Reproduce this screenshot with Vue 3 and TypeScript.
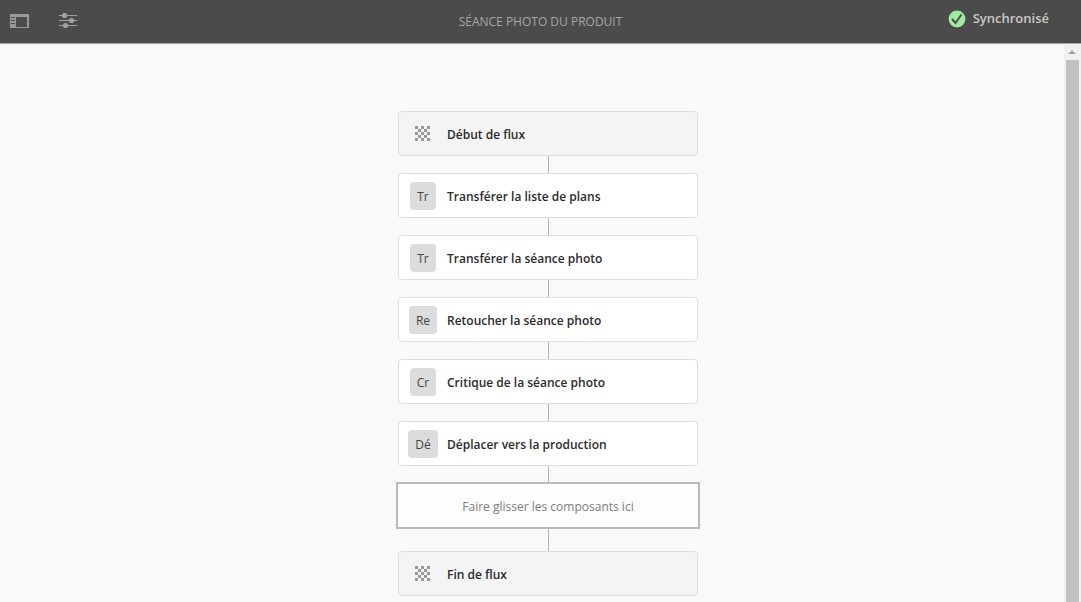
<script setup lang="ts">
interface Step {
  id: number
  label: string
  badge?: string
}

const steps: Step[] = [
  { id: 1, label: 'Début de flux' },
  { id: 2, label: 'Transférer la liste de plans', badge: 'Tr' },
  { id: 3, label: 'Transférer la séance photo', badge: 'Tr' },
  { id: 4, label: 'Retoucher la séance photo', badge: 'Re' },
  { id: 5, label: 'Critique de la séance photo', badge: 'Cr' },
  { id: 6, label: 'Déplacer vers la production', badge: 'Dé' },
]

const checkerCells: { x: number; y: number }[] = []
for (let row = 0; row < 5; row++) {
  for (let col = 0; col < 5; col++) {
    if ((row + col) % 2 === 0) checkerCells.push({ x: col * 3, y: row * 3 })
  }
}
</script>

<template>
  <div class="editor">
    <header class="topbar">
      <div class="tools">
        <button type="button" class="tool" aria-label="Panneau latéral">
          <svg width="20" height="16" viewBox="0 0 20 16" shape-rendering="crispEdges">
            <path fill="#989898" fill-rule="evenodd" d="M1 1h19v14H1zM7 4v10h11V4zM2 4h4v1H2zM2 7h4v1H2zM2 10h4v1H2z" />
          </svg>
        </button>
        <button type="button" class="tool" aria-label="Propriétés">
          <svg width="20" height="16" viewBox="0 0 20 16">
            <g fill="#a0a0a0">
              <path d="M1 2h18v1H1zM1 7h18v1H1zM1 12h18v1H1z" />
              <circle cx="6.500" cy="2.500" r="2.600" />
              <circle cx="13.500" cy="7.500" r="2.600" />
              <circle cx="7.500" cy="12.500" r="2.600" />
            </g>
          </svg>
        </button>
      </div>
      <h1 class="title">SÉANCE PHOTO DU PRODUIT</h1>
      <div class="status" role="status">
        <svg width="18" height="20" viewBox="0 0 18 20">
          <circle cx="9" cy="11" r="8.400" fill="#a0eba0" />
          <path d="M4 11l3.500 4 6-8.500" fill="none" stroke="#4b4b4b" stroke-width="2" />
        </svg>
        <span>Synchronisé</span>
      </div>
    </header>

    <div class="workspace">
      <main class="canvas">
        <div class="flow">
          <template v-for="step in steps" :key="step.id">
            <div class="card" :class="{ terminal: !step.badge }">
              <span class="icon">
                <span v-if="step.badge" class="badge">{{ step.badge }}</span>
                <svg v-else width="16" height="15" viewBox="0 0 16 15" shape-rendering="crispEdges">
                  <rect v-for="c in checkerCells" :key="`${c.x}-${c.y}`" :x="c.x" :y="c.y" width="3" height="3" fill="#999" />
                </svg>
              </span>
              <span class="label">{{ step.label }}</span>
            </div>
            <div class="link"></div>
          </template>
          <div class="drop">Faire glisser les composants ici</div>
          <div class="link last"></div>
          <div class="card terminal">
            <span class="icon">
              <svg width="16" height="15" viewBox="0 0 16 15" shape-rendering="crispEdges">
                <rect v-for="c in checkerCells" :key="`${c.x}-${c.y}`" :x="c.x" :y="c.y" width="3" height="3" fill="#999" />
              </svg>
            </span>
            <span class="label">Fin de flux</span>
          </div>
        </div>
      </main>
      <div class="scrollbar" aria-hidden="true">
        <svg class="arrow" width="17" height="16" viewBox="0 0 17 16">
          <path d="M4 10h8L8 6z" fill="#a3a3a3" />
        </svg>
        <div class="thumb"></div>
      </div>
    </div>
  </div>
</template>

<style>
body {
  background: #f9f9f9;
}
</style>

<style scoped>
.editor {
  display: flex;
  flex-direction: column;
  height: 100vh;
  overflow: hidden;
  font-family: "Open Sans", "Noto Sans", sans-serif;
  font-size: 12px;
  color: #2b2b2b;
}

.topbar {
  display: grid;
  grid-template-columns: 1fr auto 1fr;
  align-items: center;
  flex: none;
  min-height: 43px;
  background: #4b4b4b;
  border-bottom: 1px solid #aaa6a6;
}

.tools {
  display: flex;
  gap: 29px;
  padding: 0 0 2px 9px;
}

.tool {
  display: flex;
  padding: 0;
  border: 0;
  background: none;
}

.title {
  margin: 0;
  font-size: 12px;
  font-weight: 400;
  color: #a6a6a6;
}

.status {
  display: flex;
  align-items: center;
  justify-content: flex-end;
  gap: 7px;
  padding: 0 32px 8px 0;
  font-size: 13px;
  font-weight: 600;
  color: #c8c8c8;
}

.workspace {
  display: flex;
  flex: 1;
  min-height: 0;
}

.canvas {
  flex: 1;
  padding: 67px 0 0 32px;
}

.flow {
  display: flex;
  flex-direction: column;
  align-items: center;
}

.card {
  display: flex;
  align-items: center;
  box-sizing: border-box;
  width: 300px;
  min-height: 45px;
  border: 1px solid #dedede;
  border-radius: 4px;
  background: #fff;
}

.terminal {
  background: #f4f4f4;
}

.icon {
  display: flex;
  justify-content: center;
  width: 48px;
}

.badge {
  padding: 2px 7px 0;
  border-radius: 4px;
  background: #dcdcdc;
  color: #444;
  font-size: 12px;
  line-height: 26px;
}

.label {
  padding-top: 2px;
  font-weight: 600;
}

.link {
  width: 1px;
  height: 17px;
  background: #b4b4b4;
}

.link:has(+ .drop) {
  height: 16px;
}

.last {
  height: 22px;
}

.drop {
  box-sizing: border-box;
  width: 304px;
  padding-top: 2px;
  border: 2px solid #bababa;
  background: #fdfdfd;
  color: #7c7c7c;
  line-height: 41px;
  text-align: center;
}

.scrollbar {
  display: flex;
  flex-direction: column;
  width: 17px;
  background: #f1f1f1;
}

.arrow {
  flex: none;
}

.thumb {
  flex: 1;
  margin: 0 2px;
  background: #c1c1c1;
}
</style>
